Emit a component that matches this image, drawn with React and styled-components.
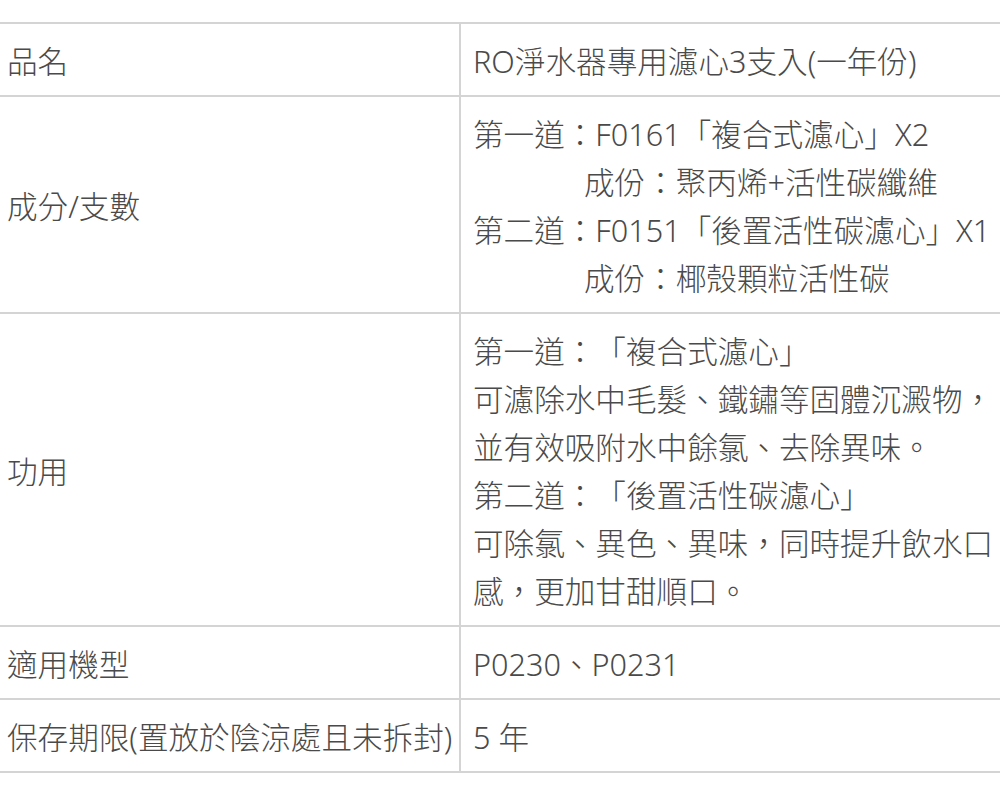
import React from "react";
import styled, { createGlobalStyle } from "styled-components";

const Global = createGlobalStyle`
  html, body {
    margin: 0;
    padding: 0;
    background: #ffffff;
  }
  body {
    font-family: "Noto Sans", "Noto Sans CJK TC", sans-serif;
    overflow: hidden;
  }
`;

const Page = styled.div`
  width: 1000px;
  height: 800px;
  padding-top: 22px;
  box-sizing: border-box;
  overflow: hidden;
`;

const Table = styled.table`
  width: 1000px;
  table-layout: fixed;
  border-collapse: collapse;
  font-size: 30.6px;
  font-weight: 300;
  line-height: 48px;
  color: #4a4a4a;
  text-spacing-trim: space-all;
`;

const Row = styled.tr`
  border-top: 2px solid #d4d4d4;
  border-bottom: 2px solid #d4d4d4;
`;

const LabelCell = styled.td`
  width: 460px;
  padding: 13px 0 10px 7px;
  box-sizing: border-box;
  vertical-align: middle;
  white-space: nowrap;
  border-right: 2px solid #d4d4d4;
`;

const ValueCell = styled.td`
  padding: 13px 0 10px 12px;
  vertical-align: middle;
  white-space: nowrap;
`;

const Line = styled.div`
  white-space: pre;
  padding-left: ${(p) => (p.$indent ? "111px" : "0")};
`;

const rows = [
  { label: "品名", lines: [["RO淨水器專用濾心3支入(一年份)"]] },
  {
    label: "成分/支數",
    lines: [
      ["第一道：F0161「複合式濾心」X2"],
      ["成份：聚丙烯+活性碳纖維", true],
      ["第二道：F0151「後置活性碳濾心」X1"],
      ["成份：椰殼顆粒活性碳", true],
    ],
  },
  {
    label: "功用",
    lines: [
      ["第一道：「複合式濾心」"],
      ["可濾除水中毛髮、鐵鏽等固體沉澱物，"],
      ["並有效吸附水中餘氯、去除異味。"],
      ["第二道：「後置活性碳濾心」"],
      ["可除氯、異色、異味，同時提升飲水口"],
      ["感，更加甘甜順口。"],
    ],
  },
  { label: "適用機型", lines: [["P0230、P0231"]] },
  { label: "保存期限(置放於陰涼處且未拆封)", lines: [["5 年"]] },
];

export default function App() {
  return (
    <>
      <Global />
      <Page>
        <Table>
          <tbody>
            {rows.map((r) => (
              <Row key={r.label}>
                <LabelCell>{r.label}</LabelCell>
                <ValueCell>
                  {r.lines.map(([text, indent], i) => (
                    <Line key={i} $indent={indent}>
                      {text}
                    </Line>
                  ))}
                </ValueCell>
              </Row>
            ))}
          </tbody>
        </Table>
      </Page>
    </>
  );
}
